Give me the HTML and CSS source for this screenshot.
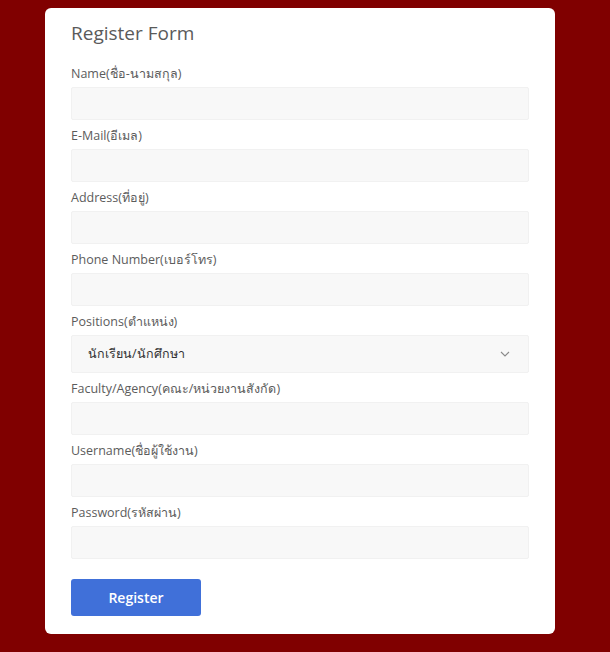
FILE: index.html
```html
<!DOCTYPE html>
<html lang="th">
<head>
  <meta charset="UTF-8">
  <title>Register Form</title>
  <link rel="stylesheet" href="styles.css">
</head>
<body>
  <div class="page">
    <form class="card">
      <h2>Register Form</h2>

      <label for="name">Name(ชื่อ-นามสกุล)</label>
      <input type="text" id="name">

      <label for="email">E-Mail(อีเมล)</label>
      <input type="text" id="email">

      <label for="address">Address(ที่อยู่)</label>
      <input type="text" id="address">

      <label for="phone">Phone Number(เบอร์โทร)</label>
      <input type="text" id="phone">

      <label for="position">Positions(ตำแหน่ง)</label>
      <div class="select">
        <span>นักเรียน/นักศึกษา</span>
        <svg width="10" height="6" viewBox="0 0 10 6"><path d="M1 1l4 4 4-4" fill="none" stroke="#8a8a8a" stroke-width="1.1"/></svg>
      </div>

      <label for="faculty">Faculty/Agency(คณะ/หน่วยงานสังกัด)</label>
      <input type="text" id="faculty">

      <label for="username">Username(ชื่อผู้ใช้งาน)</label>
      <input type="text" id="username">

      <label for="password">Password(รหัสผ่าน)</label>
      <input type="password" id="password">

      <button type="button">Register</button>
    </form>
  </div>
</body>
</html>
```

FILE: styles.css
```css
body, h2 {
  margin: 0;
  padding: 0;
}

*, *::before, *::after {
  box-sizing: border-box;
}

body {
  font-family: "Open Sans", "DejaVu Sans", sans-serif;
  background-color: #800000;
  height: 652px;
}

.page {
  padding: 8px 55px 0 45px;
}

.card {
  background-color: #fff;
  border-radius: 6px;
  padding: 11px 26px 18px;
  display: flex;
  flex-direction: column;
  align-items: flex-start;
}

h2 {
  font-size: 19px;
  font-weight: 400;
  line-height: 28px;
  color: #5a5a5a;
  margin-bottom: 16px;
}

label {
  font-size: 12.5px;
  line-height: 20px;
  color: #5c5c5c;
  padding-top: 1px;
  margin-bottom: 3px;
}

input[type="text"],
input[type="password"],
.select {
  width: 100%;
  height: 33px;
  background-color: #f8f8f8;
  border: 1px solid #f1f1f1;
  border-radius: 2px;
  margin: 0 0 5px;
  outline: none;
}

.select {
  height: 38px;
  display: flex;
  align-items: center;
  justify-content: space-between;
  padding: 0 18px 0 16px;
  font-size: 12.5px;
  color: #333;
}

button {
  margin-top: 15px;
  width: 130px;
  height: 37px;
  border: none;
  border-radius: 3px;
  background-color: #4070d9;
  color: #fff;
  font-family: inherit;
  font-size: 14px;
  font-weight: 600;
}
```
